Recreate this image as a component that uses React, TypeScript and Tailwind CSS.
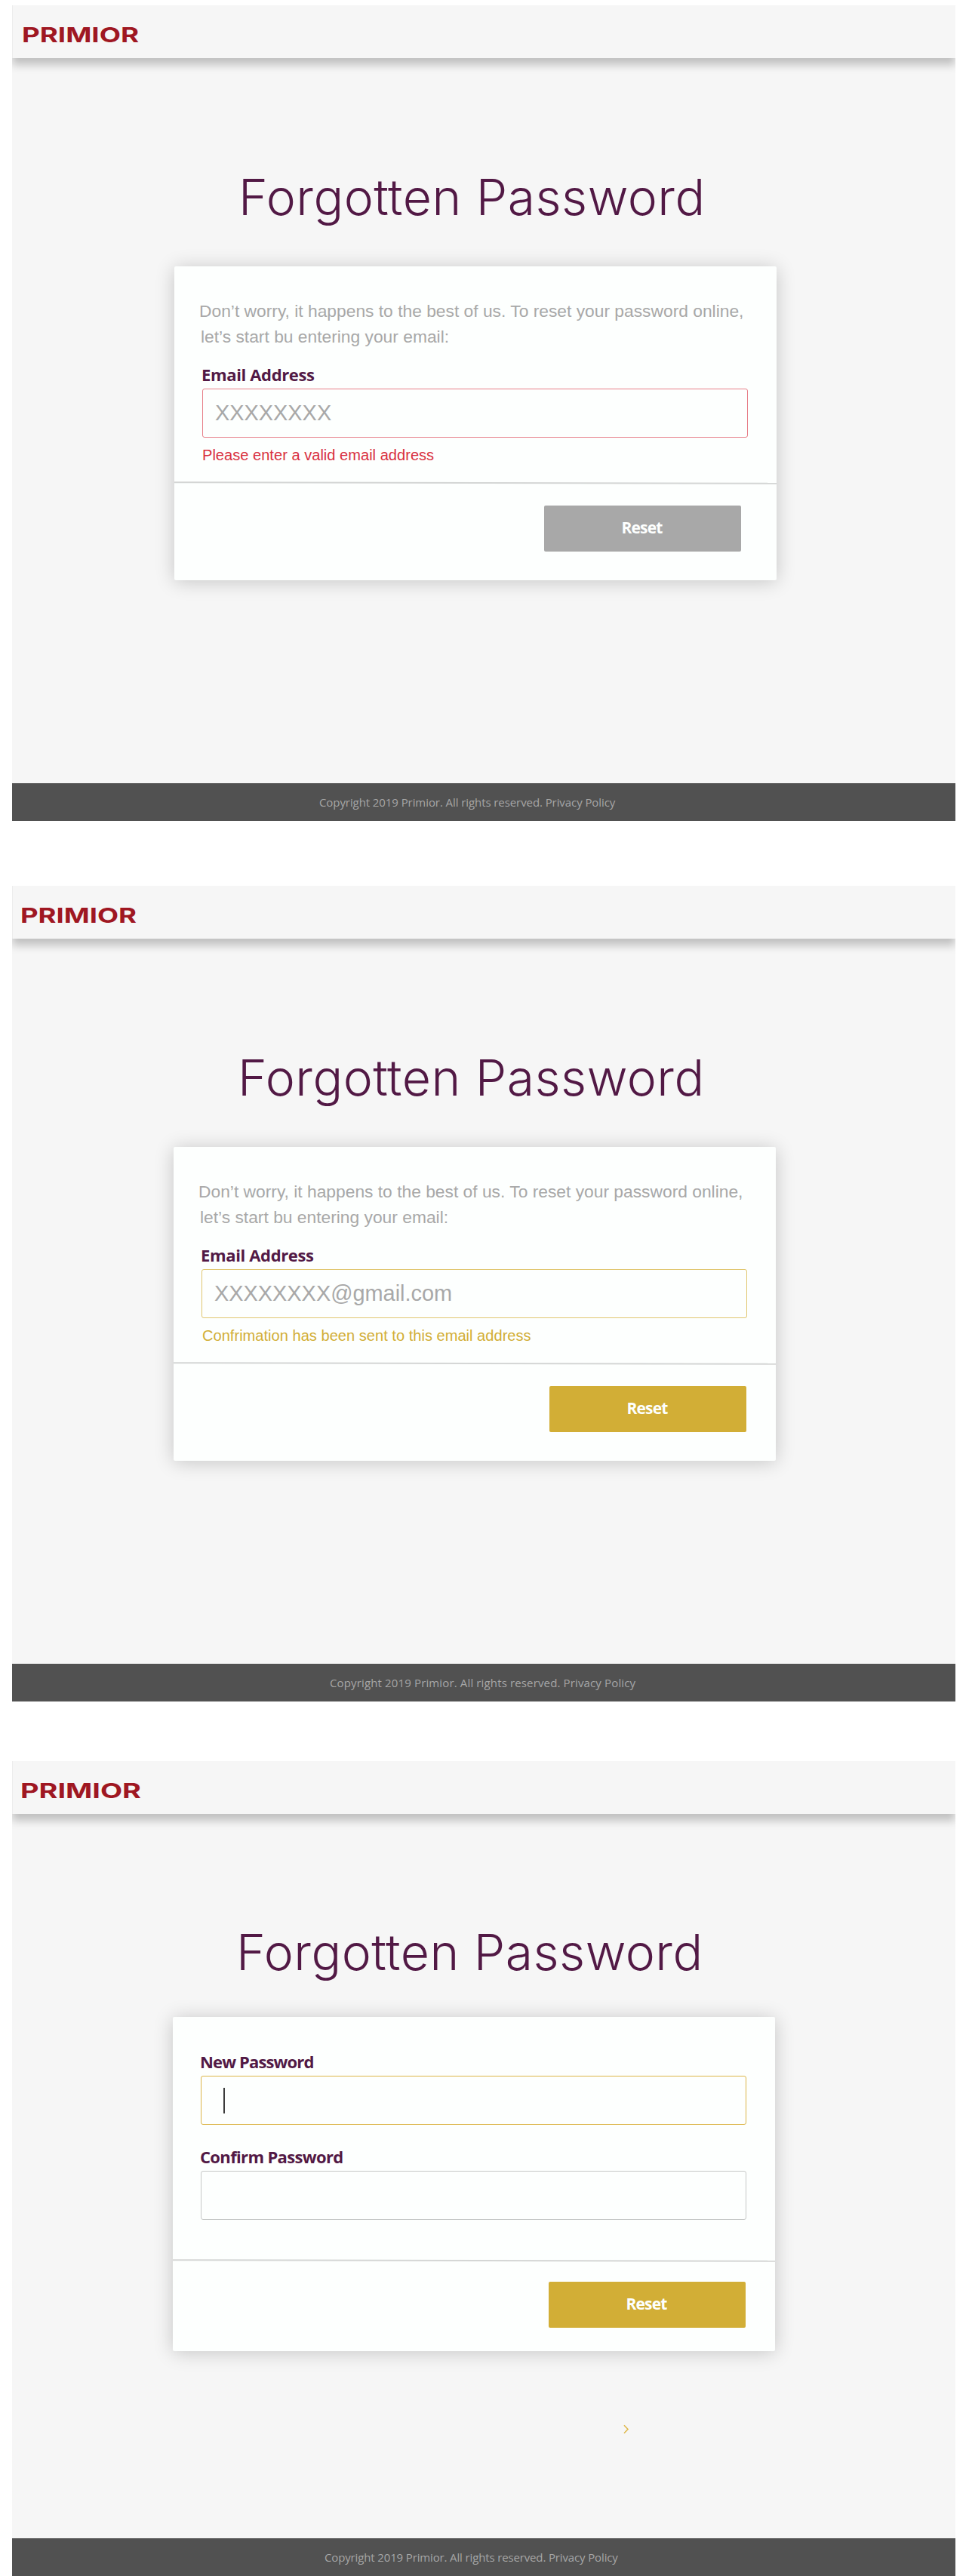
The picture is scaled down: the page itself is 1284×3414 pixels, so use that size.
import type { ReactNode } from "react";

function Logo({ width, className }: { width: number; className: string }) {
  return (
    <svg width={width + 8} height="40" className={`overflow-visible ${className}`} role="img" aria-label="Primior">
      <text
        x="2"
        y="30"
        textLength={width}
        lengthAdjust="spacingAndGlyphs"
        fill="#9f1722"
        fontSize="27.5"
        fontWeight="650"
        fontFamily="Inter, sans-serif"
      >
        PRIMIOR
      </text>
    </svg>
  );
}

function Screen({
  logoWidth,
  logoClass,
  footerClass,
  className,
  children,
}: {
  logoWidth: number;
  logoClass: string;
  footerClass: string;
  className: string;
  children: ReactNode;
}) {
  return (
    <section className={`ml-4 flex w-[1250px] flex-col overflow-hidden bg-[#f6f6f6] ${className}`}>
      <header className="h-[70px] shrink-0 border-l border-[#ececec] bg-[#f6f6f6] shadow-[0_9px_11px_rgba(0,0,0,0.22)]">
        <Logo width={logoWidth} className={logoClass} />
      </header>
      <main className="flex-1">{children}</main>
      <footer className="h-[50px] shrink-0 bg-[#515151] font-['Open_Sans',sans-serif] text-[15px] leading-[50px] text-[#a6a6a6]">
        <span className={`block whitespace-nowrap ${footerClass}`}>
          Copyright 2019 Primior. All rights reserved. <a href="#privacy">Privacy Policy</a>
        </span>
      </footer>
    </section>
  );
}

function Title({ className }: { className: string }) {
  return (
    <h1
      className={`whitespace-nowrap font-[Inter,sans-serif] text-[66px] leading-[80px] font-light tracking-[0.5px] text-[#521945] ${className}`}
    >
      Forgotten Password
    </h1>
  );
}

function Card({
  className,
  bodyClass,
  actionClass,
  buttonClass,
  children,
}: {
  className: string;
  bodyClass: string;
  actionClass: string;
  buttonClass: string;
  children: ReactNode;
}) {
  return (
    <form
      className={`w-[798px] rounded-[2px] bg-[#fdfffe] shadow-[0_2px_26px_rgba(0,0,0,0.2)] ${className}`}
      onSubmit={(e) => e.preventDefault()}
    >
      <div className={bodyClass}>{children}</div>
      <div className="h-[2px] rotate-[0.1deg] bg-[#d4d6d5]" />
      <div className={`flex justify-end ${actionClass}`}>
        <button
          className={`h-[61px] w-[261px] rounded-[2px] pr-[2px] pb-[2px] font-['Open_Sans',sans-serif] text-[21px] font-bold tracking-[-0.8px] text-[#fdfffe] ${buttonClass}`}
        >
          Reset
        </button>
      </div>
    </form>
  );
}

function Intro() {
  return (
    <p className="pl-[33px] font-['Liberation_Sans',Arial,sans-serif] text-[22.8px] leading-[34px] whitespace-nowrap text-[#a8a8a8]">
      <span className="block">Don’t worry, it happens to the best of us. To reset your password online,</span>
      <span className="block pl-[2px]">let’s start bu entering your email:</span>
    </p>
  );
}

function Label({ className, children }: { className: string; children: ReactNode }) {
  return (
    <label
      className={`block font-['Open_Sans',sans-serif] text-[22px] leading-[26px] font-bold whitespace-nowrap text-[#521945] ${className}`}
    >
      {children}
    </label>
  );
}

function Field({ className, children }: { className: string; children?: ReactNode }) {
  return (
    <div
      className={`ml-[37px] flex h-[65px] w-[723px] items-center rounded-[3px] border font-['Liberation_Sans',Arial,sans-serif] text-[28.9px] text-[#a8a8a8] ${className}`}
    >
      {children}
    </div>
  );
}

function Message({ className, children }: { className: string; children: ReactNode }) {
  return (
    <p
      className={`mt-[11px] font-['Liberation_Sans',Arial,sans-serif] text-[20.1px] leading-[24px] whitespace-nowrap ${className}`}
    >
      {children}
    </p>
  );
}

export default function App() {
  return (
    <div className="h-[3414px] w-[1284px] overflow-hidden bg-white pt-[7px]">
      <Screen
        logoWidth={155}
        logoClass="mt-[19px] ml-[10px]"
        footerClass="ml-[407px] tracking-[-0.08px]"
        className="h-[1081px]"
      >
        <Title className="mt-[144px] ml-[300px]" />
        <Card
          className="mt-[52px] ml-[215px] h-[416px]"
          bodyClass="h-[286px] pt-[42px]"
          actionClass="pt-[29px] pr-[47px]"
          buttonClass="bg-[#a8a8a8]"
        >
          <Intro />
          <Label className="mt-[20px] pl-[36px] tracking-[-0.35px]">Email Address</Label>
          <Field className="mt-[6px] border-[#e77f89] pl-[16px]">XXXXXXXX</Field>
          <Message className="pl-[37px] text-[#d9303f]">Please enter a valid email address</Message>
        </Card>
      </Screen>

      <Screen
        logoWidth={154}
        logoClass="mt-[19px] ml-[8px]"
        footerClass="ml-[421px] tracking-[0.14px]"
        className="mt-[86px] h-[1081px]"
      >
        <Title className="mt-[144px] ml-[299px]" />
        <Card
          className="mt-[52px] ml-[214px] h-[416px]"
          bodyClass="h-[286px] pt-[42px]"
          actionClass="pt-[29px] pr-[39px]"
          buttonClass="bg-[#d2ae36]"
        >
          <Intro />
          <Label className="mt-[20px] pl-[36px] tracking-[-0.35px]">Email Address</Label>
          <Field className="mt-[6px] border-[#e0c66f] pl-[16px]">XXXXXXXX@gmail.com</Field>
          <Message className="pl-[38px] text-[#d2ae36]">Confrimation has been sent to this email address</Message>
        </Card>
      </Screen>

      <Screen
        logoWidth={160}
        logoClass="mt-[19px] ml-[8px]"
        footerClass="ml-[414px] tracking-[-0.14px]"
        className="mt-[79px] h-[1080px]"
      >
        <Title className="mt-[143px] ml-[297px]" />
        <Card
          className="mt-[46px] ml-[213px] h-[443px]"
          bodyClass="h-[322px] pt-[46px]"
          actionClass="pt-[27px] pr-[39px]"
          buttonClass="bg-[#d2ae36]"
        >
          <Label className="pl-[36px] tracking-[-0.85px]">New Password</Label>
          <Field className="mt-[6px] border-[#dcb548] pl-[29px]">
            <span className="h-[34px] w-[1.5px] bg-[#3c3c3c]" />
          </Field>
          <Label className="mt-[29px] pl-[36px] tracking-[-0.65px]">Confirm Password</Label>
          <Field className="mt-[6px] border-[#c6c8c7]" />
        </Card>
        <svg width="8" height="13" viewBox="0 0 8 13" className="mt-[97px] ml-[810px]">
          <path d="M1 1.2 6 6.5 1 11.8" fill="none" stroke="#dfba50" strokeWidth="1.6" />
        </svg>
      </Screen>
    </div>
  );
}
